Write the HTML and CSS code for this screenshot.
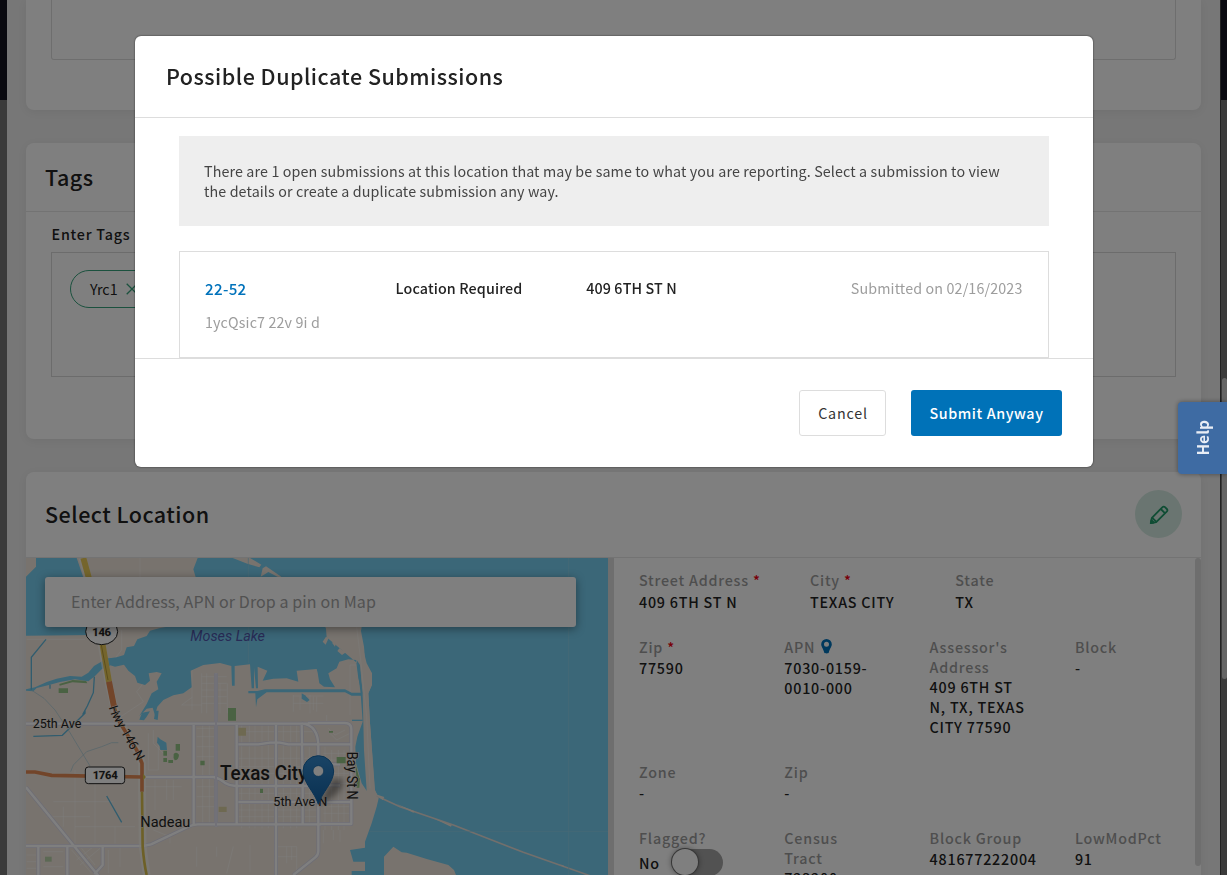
FILE: index.html
```html
<!DOCTYPE html>
<html lang="en">
<head>
<meta charset="utf-8">
<title>Possible Duplicate Submissions</title>
<link rel="stylesheet" href="styles.css">
</head>
<body>
<div class="page">
  <main class="content">
    <section class="card card-notes"><div class="notes-box"></div></section>

    <section class="card card-tags">
      <header class="card-head"><h2>Tags</h2></header>
      <div class="tags-body">
        <label class="field-label">Enter Tags</label>
        <div class="tags-box">
          <span class="chip">Yrc1
            <svg width="12" height="12" viewBox="0 0 12 12"><path d="M.7.7l10.6 10.6M11.300.7L.7 11.300" fill="none" stroke="#36a37c" stroke-width="1.300"/></svg>
          </span>
        </div>
      </div>
    </section>

    <section class="card card-location">
      <header class="card-head location-head">
        <h2>Select Location</h2>
        <span class="edit">
          <svg width="20" height="20" viewBox="0 0 20 20" fill="none" stroke="#1f9a69" stroke-width="1.800" stroke-linejoin="round"><path d="M1.800 18.200l1.100-5.400L13.300 2.300c.9-.9 1.900-.9 2.700-.1l1.800 1.800c.8.8.8 1.800-.1 2.700L7.200 17.100z"/><path d="M11.800 4l4.300 4.300M3.300 12.800l3.900 3.900" /><path d="M1.800 18.200l.6-3 2.400 2.300z" fill="#1f9a69"/></svg>
        </span>
      </header>
      <div class="location-body">
        <div class="map">
          <svg class="map-art" viewBox="18 24 1746 951" width="582" height="317">
            <defs>
              <filter id="soft"><feGaussianBlur stdDeviation="9"/></filter>
              <linearGradient id="pin" x1="0" y1="0" x2="0" y2="1"><stop offset="0" stop-color="#3589cc"/><stop offset="1" stop-color="#1260a3"/></linearGradient>
              <path id="roads" fill="none" stroke-linejoin="round" d="M18 521h846M588 370V830M521 525V825M650 525v300M768 525v450M845 525l3 160V825M375 681h205q20 4 35 18 15 9 32 9H900M655 583h60l35-5h30l25 5H900M655 756h250M393 883l110-52q15-8 30-8h370M18 888h350l25-5M18 712l225 275M55 890v85M142 890v85M248 890v55l-25 28M820 975l65-52q10-8 10-20V590q0-65-50-70M864 519h110q20 0 20 18v285H900M900 583h95M900 643h60M900 706h60M900 756h95"/>
            </defs>
            <rect x="18" y="24" width="1746" height="951" fill="#f0e7dd"/>
            <!-- street grid -->
            <g fill="none" stroke="#fff" stroke-opacity=".6" stroke-width="2">
              <path d="M360 24V90M305 240v60l-20 25M20 268H195M35 320v90M516 360v120M545 370v120M560 370v120M600 400v90M622 400v90M545 380h75M545 400h75M545 420h75M545 440h75M545 460h75M485 465h60M485 465l20-15 12-8M350 425l20-25 20-10M280 515l90-60-20-30M820 435v50M840 440v40M870 435v55M890 440v45M820 438h90M820 460h90"/>
              <path d="M665 515v320M688 515v320M705 515v320M726 515v320M745 515v320M790 515v320M812 515v320M830 515v320M868 590v230M655 545h240M655 625h240M655 650h240M655 670h240M655 730h240M655 780h240M655 800h240M530 535h60M530 560h55M530 590h58M530 620h58M530 710h58M530 740h58M530 770h58M548 520v300M568 520v300"/>
              <path d="M385 550v110M400 540v40l30 30M405 690v90M440 690v60M460 690v60M375 710h110M385 660h30v-90M165 660v220M225 690v190M100 755h180M80 800h130M130 770v60M165 830h180M285 830v50M400 840l50 20v20M530 890v60M590 890v30M690 885v80M640 890l-20 80M770 890h60v80M800 890v50M815 890v40M770 920h60"/>
              <path d="M170 930l50-40M180 945l60-50M155 900l60 70M185 895l40 50M20 915h30M20 935h30M20 955h30M70 905h60M70 950h60M265 900v70M300 890v60"/>
              <path d="M915 590v250M935 600v240M955 600v240M972 600v240M910 610h85M910 630h85M910 670h85M910 700h85M910 770h85M910 790h85M910 840v40M940 840v30M960 840v35M925 535l20 20 30-15M930 550l20 20 40-20M880 440v40M990 345v150M990 345h50M870 515h50v-20"/>
            </g>
            <use href="#roads" stroke="#dcdae8" stroke-width="12"/>
            <use href="#roads" stroke="#fff" stroke-width="7"/>
            <path d="M588 370V830" stroke="#e4e3f0" stroke-width="6"/>
            <!-- parks -->
            <g fill="#94c587">
              <path d="M624 474h24v38h-24zM116 415h28v14h-28zM118 402l40-12 40 2 4 8-45-3-38 10zM720 716h9v13h-9zM541 632h13v14h-13zM430 602h11v15h-11zM430 624h11v12h-11zM445 630h14v9h-14zM467 582h13v20h-13zM950 621h27v19h-27zM927 543h12v5h-12z"/>
              <path d="M461 612q8-9 16 2-1 17-13 17-5-6-3-19z"/>
              <path d="M75 920h20v15h-20z" opacity=".6"/>
            </g>
            <path d="M655 533h23v24h-23zM596 770h24v16h-24z" fill="#ddd3a2"/>
            <!-- water -->
            <g fill="#76cef0">
              <path d="M48 24H170L196 100 235 240 215 255 18 257V80L48 50z"/>
              <path d="M533 24L520 58 528 85 500 180 450 229 420 234 390 242 380 258 352 268 342 288 320 292 312 315 290 322 268 325 268 345 285 350 312 344 325 362 345 378 352 398 375 405 390 392 386 370 410 366 425 370 410 395 415 418 395 430 380 462 358 498 380 476 398 473 405 496 412 470 430 450 460 436 490 430 515 412 512 362 550 345 600 339 634 348 636 407 644 407 644 348 690 343 695 415 702 415 702 353 708 415 714 415 713 350 742 362 728 392 760 386 800 385 835 395 830 362 890 357 893 368 898 400 912 410 945 412 930 388 925 370 950 355 958 335 985 328 1008 330 1015 385 1026 432 1030 432 1012 340 920 262 915 200 1030 200V24z"/>
              <path d="M685 423H712L735 418H975L995 428H1028V437H995L975 427H740L712 448 708 472 706 430H685z"/>
              <path d="M1010 330L1020 345 1028 430 1034 520 1050 710 1040 722 1025 700 1008 640 1006 590 1012 560 1028 515 1022 432z"/>
              <path d="M996 509h32v4h-32z"/>
              <path d="M1025 24H1764V975H995V963H1035V935H1000L990 900 1035 893V875L1055 820 1070 770 1076 745 1065 720 1050 520 1045 430 1056 405V370L1040 340 1020 260 1025 231z"/>
              <path d="M413 560l8 8 18 10 2 22h-20l-2-12-8-10zM366 488l24-4-10 16-8 11-14-2zM406 482h10l-3 28-11-3z"/>
              <path d="M845 430l10 6 14 14-8 6-16-10z"/>
              <path d="M18 418L45 412 80 396 110 386 150 378 185 380 205 368 222 348 262 325 290 325 268 348 245 358 225 378 205 394 165 388 120 396 90 404 50 414 40 424 18 422z"/>
            </g>
            <path d="M1006 640l12 45-9-3zM1010 685h10l-2 28h-8z" fill="#94c587"/>
            <path d="M34 420V322L78 268M90 404v12M223 380l-3 48-18 40-14 26M195 482v8l-68 66-87 3M260 738l45 79" fill="none" stroke="#62b9dc" stroke-width="4"/>
            <path d="M34 420l38 25 33 35 45 68 60 100M152 665l8-20 40-40 45-15 30-12h20" fill="none" stroke="#a6c9d6" stroke-width="2"/>
            <g fill="#f0e7dd">
              <path d="M638 24H690L724 44 718 52 682 41zM722 80L728 55 738 49 784 80 775 82 745 66 732 74z"/>
              <path d="M916 231H1012L1018 325 1010 320 965 283 930 258zM908 275l10-15 8 4-9 20zM936 278l14-8-5 20zM958 295l20 12-12 8-14-12z"/>
              <path d="M1012 231L1020 228 1032 290 1036 338 1055 370 1055 405 1045 430 1050 520 1064 720 1076 742 1064 748 1040 722 1032 600 1028 430z"/>
              <path d="M1092 975V920L1120 890 1145 907 1160 908 1220 927 1285 945 1302 960 1308 975z"/>
            </g>
            <path d="M1010 231L1022 330 1040 500 1050 715" fill="none" stroke="#fff" stroke-opacity=".5" stroke-width="2"/>
            <path d="M1070 738L1140 770 1300 825 1510 907 1710 977" fill="none" stroke="#e5ded8" stroke-width="5"/>
            <path d="M1065 732l28 9-5 9zM1130 762l54 22-4 4zM1240 805l55 20-2 5zM1620 943l13 5-2 3z" fill="#f0e7dd"/>
            <path d="M685 24V340M1646 24V975M1048 844H1764" stroke="#8fd2ea" stroke-width="2" fill="none"/>
            <!-- highways -->
            <g fill="none">
              <path d="M187 24L205 85 245 285 265 395 282 470 292 505 350 600 366 640V725L368 890 380 975" stroke="#fbf7f2" stroke-width="23" opacity=".65"/>
              <path d="M190 24L207 85 248 285 267 395" stroke="#eacb58" stroke-width="18"/>
              <path d="M244 285l20 105" stroke="#b79c39" stroke-width="3"/>
              <path d="M267 395L282 470" stroke="#e58b55" stroke-width="18"/>
              <path d="M282 470L292 505 350 600 366 640V725" stroke="#e58b55" stroke-width="11"/>
              <path d="M18 666H45L95 676 366 681" stroke="#e58b55" stroke-width="11"/>
              <path d="M366 725L368 890Q372 940 380 975" stroke="#dbc04f" stroke-width="8"/>
              <path d="M371 676l4 5-4 5z" stroke="#dbc04f" stroke-width="4"/>
            </g>
            <g stroke="#222" stroke-width="3" fill="#fff">
              <ellipse cx="245" cy="245" rx="48" ry="39"/>
              <rect x="196" y="651" width="118" height="50" rx="9"/>
            </g>
            <g class="map-text">
              <text x="217" y="258" font-size="34" font-weight="700" textLength="56">146</text>
              <text x="218" y="688" font-size="34" font-weight="700" textLength="75">1764</text>
              <text x="511" y="272" font-size="43" font-style="italic" textLength="224" lengthAdjust="spacingAndGlyphs" class="lake">Moses Lake</text>
              <text x="38" y="535" font-size="39" textLength="146" lengthAdjust="spacingAndGlyphs">25th Ave</text>
              <text x="361" y="832" font-size="45" textLength="150" lengthAdjust="spacingAndGlyphs">Nadeau</text>
              <text x="600" y="691" font-size="60" font-weight="500" textLength="262" lengthAdjust="spacingAndGlyphs">Texas City</text>
              <text x="760" y="769" font-size="40" textLength="162" lengthAdjust="spacingAndGlyphs">5th Ave N</text>
              <text transform="translate(980 605) rotate(90)" font-size="42" textLength="144" lengthAdjust="spacingAndGlyphs">Bay St N</text>
              <text transform="translate(266 472) rotate(72)" font-size="38">H</text>
              <text transform="translate(275 496) rotate(61)" font-size="40" textLength="158" lengthAdjust="spacingAndGlyphs">wy 146 N</text>
            </g>
            <path d="M895 763L935 690Q965 680 970 695 965 725 925 750z" fill="#000" opacity=".4" filter="url(#soft)"/>
            <path d="M895 763C885 728 849 698 849 663A46 46 0 0 1 941 663C941 698 905 728 895 763z" fill="url(#pin)" stroke="#1767a8" stroke-width="3"/>
            <circle cx="895" cy="663" r="16" fill="#fff" stroke="#1765a5" stroke-width="2"/>
          </svg>
          <div class="search">Enter Address, APN or Drop a pin on Map</div>
        </div>
        <div class="divider"></div>
        <div class="details">
          <div class="row row-address">
            <div class="cell"><b>Street Address <i>*</i></b><span>409 6TH ST N</span></div>
            <div class="cell"><b>City <i>*</i></b><span>TEXAS CITY</span></div>
            <div class="cell"><b>State</b><span>TX</span></div>
          </div>
          <div class="row row-parcel">
            <div class="cell"><b>Zip <i>*</i></b><span>77590</span></div>
            <div class="cell"><b>APN <svg class="apn-pin" width="11" height="15" viewBox="0 0 11 15"><path fill-rule="evenodd" fill="#0072bb" d="M5.500 0A5.300 5.300 0 0 1 10.800 5.300C10.800 8 9 9 7.800 13.600 7.400 14.800 3.600 14.800 3.200 13.600 2 9 .2 8 .2 5.300A5.300 5.300 0 0 1 5.500 0zM5.500 2.700a2.500 2.500 0 1 0 0 5 2.500 2.500 0 0 0 0-5z"/></svg></b><span>7030-0159-<br>0010-000</span></div>
            <div class="cell"><b class="tight">Assessor's<br>Address</b><span>409 6TH ST<br>N, TX, TEXAS<br>CITY 77590</span></div>
            <div class="cell"><b>Block</b><span>-</span></div>
          </div>
          <div class="row row-zone">
            <div class="cell"><b>Zone</b><span>-</span></div>
            <div class="cell"><b>Zip</b><span>-</span></div>
          </div>
          <div class="row row-census">
            <div class="cell"><b>Flagged?</b><div class="flag"><span>No</span><div class="toggle"><div class="knob"></div></div></div></div>
            <div class="cell"><b class="tight">Census<br>Tract</b><span>723200</span></div>
            <div class="cell"><b>Block Group</b><span>481677222004</span></div>
            <div class="cell"><b>LowModPct</b><span>91</span></div>
          </div>
        </div>
        <div class="details-scroll"></div>
      </div>
    </section>
  </main>
  <div class="page-scroll"><div class="page-thumb"></div></div>
</div>

<div class="overlay">
  <div class="modal">
    <header class="modal-head">Possible Duplicate Submissions</header>
    <div class="modal-body">
      <p class="notice">There are 1 open submissions at this location that may be same to what you are reporting. Select a submission to view<br>the details or create a duplicate submission any way.</p>
      <article class="submission">
        <div class="sub-row">
          <a class="sub-id">22-52</a>
          <span class="sub-type">Location Required</span>
          <span class="sub-addr">409 6TH ST N</span>
          <span class="sub-date">Submitted on 02/16/2023</span>
        </div>
        <div class="sub-note">1ycQsic7 22v 9i d</div>
      </article>
    </div>
    <footer class="modal-foot">
      <button class="btn btn-cancel">Cancel</button>
      <button class="btn btn-primary">Submit Anyway</button>
    </footer>
  </div>
</div>
<div class="help"><span>Help</span></div>
</body>
</html>
```
FILE: styles.css
```css
* { box-sizing: border-box; }
html, body { height: 100%; }
body {
  margin: 0;
  overflow: hidden;
  font-family: "Noto Sans CJK SC", "Open Sans", sans-serif;
  font-size: 14.3px;
  color: #222;
}
h2 { margin: 0; font-size: 21.5px; font-weight: 500; letter-spacing: .5px; color: #222; }

.page {
  display: flex;
  height: 875px;
  padding-left: 7px;
  overflow: hidden;
  background: linear-gradient(#151520 0 100px, #767676 100px);
}
.content {
  flex: 1;
  min-width: 0;
  display: flex;
  flex-direction: column;
  gap: 33px;
  padding: 0 19px;
  background: #eee;
}
.page-scroll { flex: none; width: 7px; padding: 378px 0 0 1px; border-left: 1px solid #444; }
.page-thumb { width: 5px; height: 301px; border-radius: 3px; background: #cbcbcb; }

.card {
  flex: none;
  background: #fff;
  border-radius: 8px;
  box-shadow: 0 2px 10px rgba(0, 0, 0, .06);
}
.card-notes { height: 110px; padding: 0 25px; border-radius: 0 0 8px 8px; }
.notes-box { height: 60px; border: 1px solid #ddd; border-top: 0; border-radius: 0 0 3px 3px; }
.card-tags { height: 296px; }
.card-head {
  display: flex;
  align-items: center;
  height: 69px;
  padding: 0 19px 2px;
  border-bottom: 1px solid #e6e6e6;
}
.tags-body { display: flex; flex-direction: column; padding: 12px 25px; }
.field-label { padding-left: .5px; font-weight: 500; letter-spacing: .8px; line-height: 20px; }
.tags-box { height: 125px; margin-top: 8px; padding: 17px 18px; border: 1px solid #d8d8d8; }
.chip {
  display: inline-flex;
  align-items: center;
  gap: 8px;
  height: 38px;
  padding: 0 19px;
  border: 1px solid #36a37c;
  border-radius: 19px;
  line-height: 36px;
}

.card-location { height: 440px; }
.location-head { justify-content: space-between; height: 86px; }
.edit {
  display: flex;
  align-items: center;
  justify-content: center;
  width: 47px;
  height: 48px;
  padding-top: 2px;
  border-radius: 50%;
  background: #d5ebe2;
}
.location-body { display: flex; height: 317px; overflow: hidden; }
.map { flex: none; position: relative; width: 582px; }
.map-art { display: block; }
.map-text { font-family: Roboto, sans-serif; fill: #222; }
.map-text text { stroke: #f0e7dd; stroke-width: 3px; paint-order: stroke; }
.map-text .lake { fill: #5157ad; stroke: none; }
.search {
  position: absolute;
  left: 19px;
  top: 19px;
  width: 531px;
  height: 50px;
  padding-left: 26px;
  border-radius: 3px;
  background: #fff;
  box-shadow: 0 2px 10px rgba(0, 0, 0, .4);
  font-size: 16px;
  letter-spacing: .1px;
  line-height: 48px;
  color: #a4a4a4;
}
.divider { flex: none; width: 6px; background: #dcdcdc; }
.details { flex: 1; min-width: 0; padding: 12px 0 0 25px; }
.details-scroll { flex: none; width: 6px; height: 308px; border-radius: 3px; background: #dcdcdc; }
.row { display: grid; grid-template-columns: repeat(4, 145.3px); align-content: start; }
.row-address { grid-template-columns: 171px 145.3px 145px; height: 67px; }
.row-parcel { height: 125px; }
.row-zone { height: 66px; }
.cell { display: flex; flex-direction: column; line-height: 20px; letter-spacing: .78px; }
.cell b { margin-bottom: 1px; font-weight: 500; color: #9d9d9d; }
.cell b.tight { margin-bottom: 0; }
.cell b i { font-style: normal; color: #f00010; }
.cell span { font-weight: 500; }
.row-address .cell b { margin-bottom: 2px; }
.apn-pin { margin-left: 2px; vertical-align: -1px; }
.flag { display: flex; gap: 12.600px; line-height: 27px; }
.toggle { width: 51px; height: 27px; border-radius: 14px; background: #a5a5a5; }
.knob { width: 26px; height: 26px; border-radius: 50%; background: #fff; box-shadow: 0 0 6px rgba(0, 0, 0, .5), 0 0 0 1px #888; }

.overlay {
  position: fixed;
  inset: 0;
  display: flex;
  align-items: flex-start;
  padding: 36px 0 0 135px;
  background: rgba(0, 0, 0, .5);
}
.modal {
  display: flex;
  flex-direction: column;
  width: 958px;
  height: 431px;
  border-radius: 6px;
  background: #fff;
  box-shadow: 0 0 2px rgba(0, 0, 0, .7);
}
.modal-head {
  height: 82px;
  padding-left: 31px;
  border-bottom: 1px solid #ddd;
  font-size: 21.5px;
  font-weight: 500;
  letter-spacing: .48px;
  line-height: 79px;
}
.modal-body { height: 240px; padding: 18px 44px 0; overflow: hidden; }
.notice {
  height: 90px;
  margin: 0 0 25px;
  padding: 25px;
  background: #eee;
  line-height: 20px;
  letter-spacing: .114px;
  color: #444;
  white-space: nowrap;
}
.submission { height: 107px; padding: 26px 25.500px 0 25px; border: 1px solid #ddd; letter-spacing: .13px; }
.sub-row { display: grid; grid-template-columns: 190.600px 190.600px 1fr auto; line-height: 20px; font-weight: 500; }
.sub-id { color: #0072bb; font-size: 15.200px; font-weight: 500; letter-spacing: .3px; }
.sub-date, .sub-note { font-weight: 400; color: #9d9d9d; }
.sub-note { margin-top: 14px; line-height: 20px; }
.modal-foot {
  flex: 1;
  display: flex;
  justify-content: flex-end;
  gap: 25px;
  padding: 31px 31px 0;
  border-top: 1px solid #ddd;
}
.btn { height: 46px; padding: 0 0 2px; border-radius: 3px; font: inherit; letter-spacing: .8px; }
.btn-cancel { width: 87px; padding-left: 1px; border: 1px solid #ddd; background: #fff; color: #333; }
.btn-primary { width: 151px; border: 0; background: #0072b8; color: #fff; font-weight: 500; letter-spacing: .6px; }

.help {
  position: fixed;
  right: 0;
  top: 402px;
  display: flex;
  align-items: center;
  justify-content: center;
  width: 49px;
  height: 72px;
  padding-right: 2px;
  border-radius: 4px 0 0 4px;
  background: #3e6ba3;
  box-shadow: 0 0 5px rgba(0, 0, 0, .4);
  color: #e8edf5;
  font-size: 15.500px;
  font-weight: 700;
}
.help span { writing-mode: vertical-rl; transform: rotate(180deg); }
```
